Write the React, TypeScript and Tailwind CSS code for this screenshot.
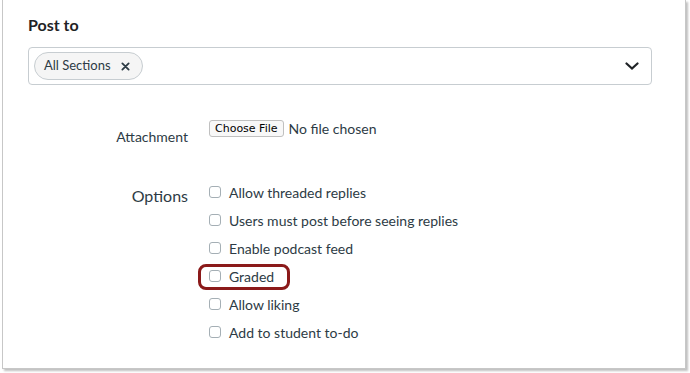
import { useState } from "react";

const options = [
  "Allow threaded replies",
  "Users must post before seeing replies",
  "Enable podcast feed",
  "Graded",
  "Allow liking",
  "Add to student to-do",
];

function Checkbox({ label, highlight }: { label: string; highlight?: boolean }) {
  const [checked, setChecked] = useState(false);
  return (
    <label className="relative flex h-[28px] cursor-pointer items-center gap-[8px]">
      {highlight && (
        <span className="pointer-events-none absolute left-[-11px] top-[2px] h-[26px] w-[92px] rounded-[8px] border-[3px] border-[#8b1a1a]" />
      )}
      <span
        onClick={() => setChecked(!checked)}
        className="h-[12px] w-[12px] rounded-[3px] border border-[#a5afb5] bg-white"
      />
      <span className="text-[14px] text-[#2d3b45]">{label}</span>
    </label>
  );
}

export default function App() {
  return (
    <div className="h-[373px] w-[690px] overflow-hidden bg-white font-['Lato','Liberation_Sans',sans-serif]">
      <div className="ml-[2px] h-[369px] w-[684px] border-x border-b border-[#c7c7c7] bg-white px-[25px] pt-[15px] shadow-[2px_2px_2px_rgba(0,0,0,0.25)]">
        <h2 className="text-[16px] font-bold leading-[20px] text-[#1f2326]">Post to</h2>
        <div className="mt-[12px] flex h-[38px] w-[624px] items-center justify-between rounded-[4px] border border-[#c7cdd1] pl-[5px] pr-[12px]">
          <span className="flex h-[28px] items-center gap-[10px] rounded-full border border-[#c7cdd1] bg-[#f5f5f5] pl-[9px] pr-[12px] text-[13px] text-[#2d3b45]">
            All Sections
            <svg width="9" height="9" viewBox="0 0 10 10" className="text-[#2d3b45]">
              <path d="M1.5 1.5 L8.5 8.5 M8.5 1.5 L1.5 8.5" stroke="currentColor" strokeWidth="2" strokeLinecap="round" />
            </svg>
          </span>
          <svg width="14" height="9" viewBox="0 0 14 9" className="text-[#1f2326]">
            <path d="M1.5 1.5 L7 6.5 L12.5 1.5" stroke="currentColor" strokeWidth="2.2" fill="none" strokeLinecap="round" />
          </svg>
        </div>

        <div className="mt-[33px] grid grid-cols-[160px_1fr] gap-x-[21px]">
          <div className="pt-[8px] text-right text-[14px] text-[#2d3b45]">Attachment</div>
          <div className="flex items-start gap-[5px]">
            <button className="mt-[2px] h-[17px] rounded-[3px] border border-[#c0c0c0] bg-[#f8f8f8] px-[5px] font-['DejaVu_Sans',sans-serif] text-[11px] leading-[15px] text-black">
              Choose File
            </button>
            <span className="text-[14px] text-[#2d3b45]">No file chosen</span>
          </div>

          <div className="mt-[35px] pt-[2px] text-right text-[16px] text-[#2d3b45]">Options</div>
          <div className="mt-[31px] flex flex-col">
            {options.map((o) => (
              <Checkbox key={o} label={o} highlight={o === "Graded"} />
            ))}
          </div>
        </div>
      </div>
    </div>
  );
}
